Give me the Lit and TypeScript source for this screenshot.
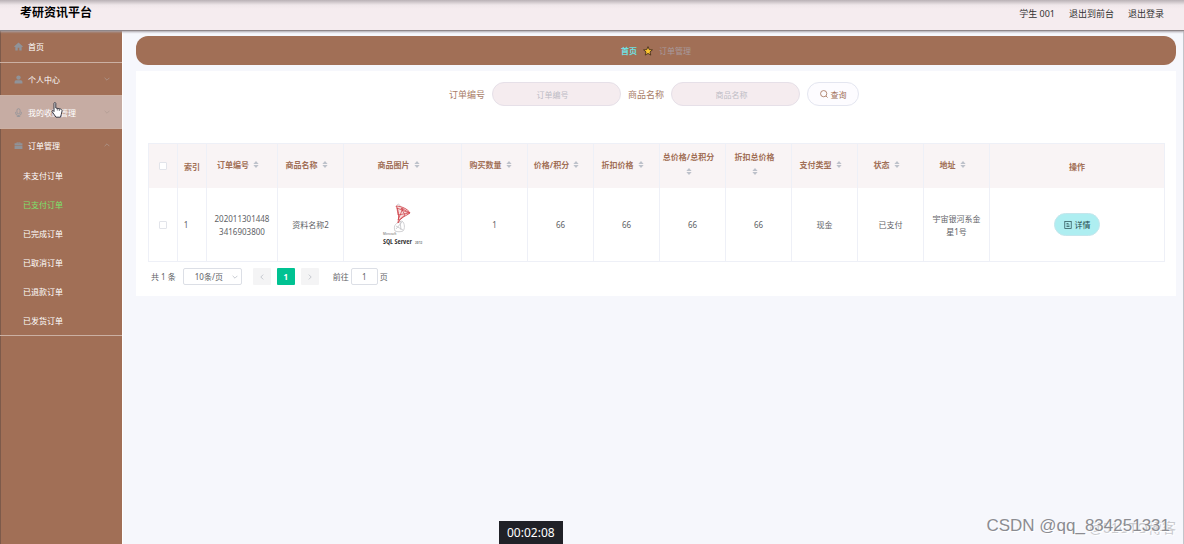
import { LitElement, html, css, svg, nothing } from "lit";
import { customElement, state } from "lit/decorators.js";
import { classMap } from "lit/directives/class-map.js";

const icons = {
  home: svg`<path d="M8 1 .6 7.4V8.8h1.800V15h4.200v-4.600h2.800V15h4.200V8.800h1.800V7.400z" />`,
  user: svg`<circle cx="8" cy="4.6" r="3.9" /><path d="M1 15v-2.400c0-2 1.600-3.200 3.600-3.200h6.800c2 0 3.600 1.200 3.600 3.200V15z" />`,
  mic: svg`<rect x="5.2" y="1.2" width="5.6" height="9" rx="2.8" fill="none" stroke="currentColor" stroke-width="1.4" /><path d="M2.8 7v1.2a5.2 5.2 0 0 0 10.4 0V7M8 13.4V15M5 15h6" fill="none" stroke="currentColor" stroke-width="1.4" />`,
  box: svg`<path d="M1 4h3.600V2h6.800v2H15v4H1zM6 3.200V4h4v-.8zM1 9h14v5.400H1z" />`,
};

interface MenuItem {
  label: string;
  icon: keyof typeof icons;
  arrow?: "down" | "up";
  children?: string[];
}

const MENU: MenuItem[] = [
  { label: "首页", icon: "home" },
  { label: "个人中心", icon: "user", arrow: "down" },
  { label: "我的收藏管理", icon: "mic", arrow: "down" },
  {
    label: "订单管理",
    icon: "box",
    arrow: "up",
    children: ["未支付订单", "已支付订单", "已完成订单", "已取消订单", "已退款订单", "已发货订单"],
  },
];

const COLUMNS = [
  "订单编号", "商品名称", "商品图片", "购买数量", "价格/积分", "折扣价格",
  "总价格/总积分", "折扣总价格", "支付类型", "状态", "地址",
];

const chevron = (dir: "up" | "down" | "left" | "right") => {
  const d = { up: "M1 7l4-4 4 4", down: "M1 3l4 4 4-4", left: "M7 1L3 5l4 4", right: "M3 1l4 4-4 4" }[dir];
  return html`<svg class="chevron" viewBox="0 0 10 10" aria-hidden="true"><path d=${d} /></svg>`;
};

@customElement("side-menu")
class SideMenu extends LitElement {
  @state() private current = "已支付订单";
  @state() private hovered = "我的收藏管理";

  static styles = css`
    :host { display: block; }
    ul { list-style: none; margin: 0; padding: 0; }
    .group { border-bottom: 1px solid #cbb0a3; }
    a { display: flex; align-items: center; color: #fff; text-decoration: none; font-size: 8px; }
    .top { height: 32px; padding: 0 12px 0 14px; gap: 5px; }
    .top.hover { background: #c6aca3; }
    .label { flex: 1; }
    .icon { width: 9px; height: 9px; color: #909399; fill: currentColor; }
    .chevron { width: 6px; height: 6px; fill: none; stroke: #b09a92; stroke-width: 1.2; }
    .sub { height: 29px; padding-left: 23px; }
    .sub.active { color: #7be36c; }
  `;

  render() {
    return html`<nav><ul>
      ${MENU.map((m) => html`<li class="group">
        <a href="#" class=${classMap({ top: true, hover: m.label === this.hovered })}
          @mouseenter=${() => (this.hovered = m.label)}>
          <svg class="icon" viewBox="0 0 16 16" aria-hidden="true">${icons[m.icon]}</svg>
          <span class="label">${m.label}</span>
          ${m.arrow ? chevron(m.arrow) : nothing}
        </a>
        ${m.children ? html`<ul>${m.children.map((c) => html`<li>
          <a href="#" class=${classMap({ sub: true, active: c === this.current })}
            @click=${() => (this.current = c)}>${c}</a></li>`)}</ul>` : nothing}
      </li>`)}
    </ul></nav>`;
  }
}

@customElement("order-table")
class OrderTable extends LitElement {
  static styles = css`
    :host { display: block; }
    table { width: 100%; table-layout: fixed; border-collapse: separate; border-spacing: 0; border: 1px solid #eef0f7; border-width: 1px 1px 0 1px; font-size: 8px; line-height: 13px; box-sizing: border-box; }
    th, td { box-sizing: border-box; text-align: center; padding: 0 6px; border-right: 1px solid #eef0f7; overflow-wrap: anywhere; }
    th { height: 44px; background: #f9f4f5; color: #a16f56; font-weight: 700; }
    th.sortable { padding: 0 12px 4px 4px; }
    td { height: 74px; color: #606266; border-bottom: 1px solid #eef0f7; }
    th:last-child, td:last-child { border-right: 0; }
    .plain { padding: 0; }
    .index { padding: 0 12px 0 0; }
    .check { width: 29px; }
    .code { width: 71px; }
    .name { width: 66px; }
    .image { width: 118px; }
    input { appearance: none; display: block; width: 8px; height: 8px; margin: 0 auto; border: 1px solid #e2e4ea; border-radius: 1px; background: #fff; }
    .head { display: flex; flex-wrap: wrap; justify-content: center; align-items: center; column-gap: 4px; row-gap: 2px; white-space: nowrap; }
    .sort { width: 6px; height: 7px; margin: 3px 0; fill: #bdc1ca; }
    .logo { display: block; width: 42px; height: 44px; margin: 0 auto; overflow: visible; }
    button { display: inline-flex; align-items: center; justify-content: center; gap: 3px; width: 46px; height: 23px; padding: 0; border: 1px solid #c4e6ec; border-radius: 12px; background: #aeeef1; color: #24484c; font: inherit; }
    .doc { width: 8px; height: 8px; fill: none; stroke: currentColor; stroke-width: .7; }
  `;

  render() {
    return html`<table>
      <colgroup>
        <col class="check" /><col class="check" /><col class="code" /><col class="name" /><col class="image" />
        ${COLUMNS.slice(3).map(() => html`<col class="name" />`)}
        <col />
      </colgroup>
      <thead><tr>
        <th class="plain"><input type="checkbox" aria-label="全选" /></th>
        <th class="plain">索引</th>
        ${COLUMNS.map((c) => html`<th class="sortable"><div class="head"><span>${c}</span>
          <svg class="sort" viewBox="0 0 6 8" aria-hidden="true"><path d="M3 0l3 3.4H0zM3 8L0 4.6h6z" /></svg></div></th>`)}
        <th>操作</th>
      </tr></thead>
      <tbody><tr>
        <td class="plain"><input type="checkbox" aria-label="选择" /></td>
        <td class="index">1</td>
        <td>2020113014483416903800</td>
        <td>资料名称2</td>
        <td>
          <svg class="logo" viewBox="0 0 42 44" role="img" aria-label="SQL Server 2012">
            <g fill="none" stroke="#c4c4c8" stroke-width=".8">
              <path d="M15 2c2-2 3 0 3 2M13 28c-2-6 1-8 7-10 3 2 3 8 1 10-3 1-5 1-8 0zM14 23l7 4M14 26l6-7M18 18l1 9" />
            </g>
            <path d="M14 3c5 0 12 3 14 7-4 3-9 4-12 10 1-7 1-12-2-17z" fill="#f6dede" stroke="#d14a50" stroke-width=".9" />
            <path d="M15 5l12 5-11 2zM16 17l5-12M23 12l-4-7 9 5M17 17l6-5" fill="none" stroke="#cf3a42" stroke-width=".7" />
            <text x="1" y="32" font-size="3" fill="#666">Microsoft</text>
            <text x="1" y="41" font-size="7" font-family="Open Sans Condensed, sans-serif" fill="#333">SQL Server</text>
            <text x="33" y="41" font-size="4" font-family="Open Sans Condensed, sans-serif" fill="#888">2012</text>
          </svg>
        </td>
        <td>1</td><td>66</td><td>66</td><td>66</td><td>66</td>
        <td>现金</td><td>已支付</td><td>宇宙银河系金星1号</td>
        <td><button type="button">
          <svg class="doc" viewBox="0 0 8 8" aria-hidden="true"><rect x=".8" y=".5" width="6.4" height="7" /><path d="M2.5 2.500h2M2.500 4h3M2.500 5.500h3" /></svg>详情</button></td>
      </tr></tbody>
    </table>`;
  }
}

@customElement("app-root")
class AppRoot extends LitElement {
  static styles = css`
    :host { display: flex; flex-direction: column; position: relative; min-height: 100vh; overflow: hidden; box-sizing: border-box; background: #f6f7fc; color: #606266; font-family: "Noto Sans", "Noto Sans CJK SC", sans-serif; font-size: 8px; line-height: 13px; }
    header { position: relative; z-index: 1; display: flex; align-items: center; height: 30px; padding: 0 20px; box-sizing: border-box; background: linear-gradient(#b9b1b5, #efe7ea 5px, #f5ecef 9px); box-shadow: 0 1px #8f878a, 0 2px 2px #a7a2a8; }
    h1 { flex: 1; margin: 0; padding-bottom: 4px; font-size: 12px; line-height: 16px; color: #000; }
    .links { display: flex; gap: 14px; padding-bottom: 4px; font-size: 9px; color: #333; }
    .links a { color: inherit; text-decoration: none; }
    .body { flex: 1; display: flex; }
    side-menu { width: 123px; flex: none; background: #a16f56; border-right: 1px solid #fff; box-shadow: inset 1px 0 #7d5a4a; box-sizing: border-box; }
    main { flex: 1; min-width: 0; padding: 6px 7px 0 13px; border-right: 1px solid #c3c5cb; }
    .crumbs { display: flex; align-items: center; justify-content: center; gap: 6px; height: 29px; border-radius: 12px; background: #a16f56; color: #a89a9c; margin-bottom: 6px; }
    .crumbs a { color: #6fe0e2; font-weight: 700; text-decoration: none; }
    .star { width: 10px; height: 10px; fill: #fcc630; stroke: #3f2a1c; stroke-width: 1; }
    .panel { background: #fff; padding: 11px 11px 11px 12px; }
    form { display: flex; align-items: center; justify-content: center; gap: 7px; margin-bottom: 37px; padding-right: 5px; font-size: 9px; color: #a87c67; }
    form input { width: 129px; height: 24px; box-sizing: border-box; border: 1px solid #e6e0e8; border-radius: 12px; background: #f5ecef; padding: 0 16px 0 8px; text-align: center; font: inherit; font-size: 8px; }
    form input::placeholder { color: #bdbcc5; }
    form button { display: flex; align-items: center; justify-content: center; gap: 3px; width: 52px; height: 24px; padding: 0; border: 1px solid #e4e6f0; border-radius: 12px; background: #fdfcff; color: #a16f56; font: inherit; font-size: 8px; }
    .search { width: 8px; height: 8px; fill: none; stroke: currentColor; }
    .pager { display: flex; align-items: center; gap: 6px; margin-top: 6px; padding-left: 3px; }
    .select { position: relative; margin: 0 5px 0 1px; }
    .select select { appearance: none; display: block; width: 59px; height: 17px; padding: 0 11px; border: 1px solid #dcdfe6; border-radius: 2px; background: #fff; color: #606266; font: inherit; box-sizing: border-box; }
    .select .chevron { position: absolute; right: 4px; top: 6px; }
    .chevron { width: 6px; height: 6px; fill: none; stroke: #b4b8c0; stroke-width: 1.2; }
    .page { display: flex; align-items: center; justify-content: center; width: 18px; height: 17px; padding: 0; border: 0; border-radius: 1px; background: #f4f4f5; color: #606266; font: inherit; }
    .page.on { background: #00c292; color: #fff; font-weight: 700; }
    .jump { display: flex; align-items: center; gap: 2px; margin-left: 8px; }
    .jump input { width: 27px; height: 17px; box-sizing: border-box; border: 1px solid #dcdfe6; border-radius: 2px; padding: 0; text-align: center; color: #606266; font: inherit; }
    .cursor { position: absolute; left: 51px; top: 102px; width: 12px; height: 16px; }
    .timer { position: absolute; left: 499px; bottom: 0; padding: 4px 8px 3px; background: #202127; color: #fff; font-size: 12px; line-height: 16px; }
    .mark { position: absolute; right: 14px; bottom: 8px; font-family: "Liberation Sans", sans-serif; font-size: 17px; line-height: 20px; color: #8b8c91; text-shadow: 1px 1px #fff; }
    .ghost { right: 8px; bottom: 6px; font-family: "Liberation Sans", "Noto Sans CJK SC", sans-serif; font-size: 14px; color: #c9cace; }
  `;

  render() {
    return html`
      <header>
        <h1>考研资讯平台</h1>
        <div class="links"><span>学生 001</span><a href="#">退出到前台</a><a href="#">退出登录</a></div>
      </header>
      <div class="body">
        <side-menu></side-menu>
        <main>
          <div class="crumbs">
            <a href="#">首页</a>
            <svg class="star" viewBox="0 0 12 12" aria-hidden="true"><path d="M6 .8l1.5 3.5 3.8.3-2.9 2.5.9 3.8L6 8.9l-3.3 2 .9-3.8L.7 4.6l3.8-.3z" /></svg>
            <span>订单管理</span>
          </div>
          <section class="panel">
            <form @submit=${(e: Event) => e.preventDefault()}>
              <label for="code">订单编号</label><input id="code" type="text" placeholder="订单编号" />
              <label for="name">商品名称</label><input id="name" type="text" placeholder="商品名称" />
              <button type="submit"><svg class="search" viewBox="0 0 10 10" aria-hidden="true"><circle cx="4.6" cy="4.6" r="3.9" /><path d="M7.5 7.5l2 2" /></svg>查询</button>
            </form>
            <order-table></order-table>
            <div class="pager">
              <span>共 1 条</span>
              <div class="select"><select aria-label="每页条数"><option>10条/页</option></select>${chevron("down")}</div>
              <button class="page" type="button" aria-label="上一页">${chevron("left")}</button>
              <button class="page on" type="button">1</button>
              <button class="page" type="button" aria-label="下一页">${chevron("right")}</button>
              <div class="jump"><label for="goto">前往</label><input id="goto" type="text" value="1" /><span>页</span></div>
            </div>
          </section>
        </main>
      </div>
      <svg class="cursor" viewBox="0 0 12 16" aria-hidden="true"><path d="M3 1.4c0-1.1 1.8-1.1 1.8 0V6l5 1.1c1 .3 1.4.9 1.2 2l-.8 3.6-.8 2.5H5L1.2 9.8C.5 8.7 1.7 8 2.4 8.8L3 9.5z" fill="#fff" stroke="#3a3a44" /><path d="M6.3 6.5v2M8.3 7v2" stroke="#3a3a44" stroke-width=".7" /></svg>
      <div class="timer">00:02:08</div>
      <div class="mark ghost">@51CTO博客</div>
      <div class="mark">CSDN @qq_834251331</div>
    `;
  }
}
